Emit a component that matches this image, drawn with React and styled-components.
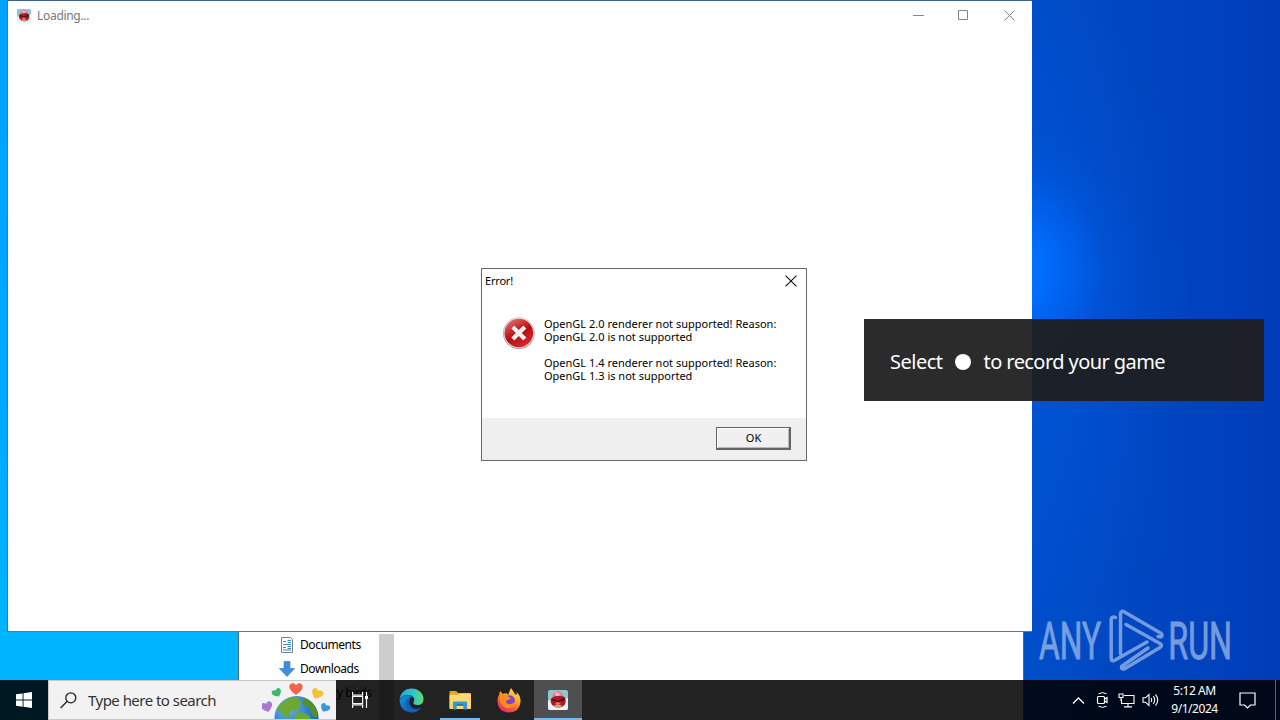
import React from "react";
import styled, { createGlobalStyle } from "styled-components";

const GlobalStyle = createGlobalStyle`
  * { box-sizing: border-box; }
  body { margin: 0; overflow: hidden; font-family: "Noto Sans", "Open Sans", sans-serif; }
  svg { display: block; flex: none; }
`;

const Desktop = styled.main`
  position: relative;
  width: 1280px;
  height: 720px;
  overflow: hidden;
  background:
    radial-gradient(ellipse 150px 145px at 1000px 270px, #007cff 0%, #0070ff 25%, rgba(0, 104, 250, 0.75) 45%, rgba(0, 92, 232, 0.3) 70%, rgba(0, 80, 215, 0) 100%),
    radial-gradient(ellipse 190px 420px at 1000px 330px, rgba(0, 92, 228, 0.6), rgba(0, 80, 210, 0)),
    linear-gradient(90deg, rgba(0, 0, 0, 0) 1020px, #004cc6 1020px, #0045c0 1160px, #003cb8 1280px),
    linear-gradient(180deg, #00a2fa, #00a8ff 50%, #00b4ff 90%);
`;

const Text = styled.span`
  display: inline-block;
  white-space: pre;
  font-size: ${(p) => p.$size}px;
  line-height: ${(p) => p.$line || p.$size * 1.3}px;
  letter-spacing: ${(p) => p.$track || 0}px;
  color: ${(p) => p.$color || "#000"};
`;

const Explorer = styled.section`
  position: absolute;
  left: 238px;
  top: 600px;
  width: 786px;
  height: 120px;
  display: flex;
  padding-top: 33px;
  background: #fff;
  border-left: 1px solid #4c6f86;
  border-right: 1px solid #3e6aa8;
`;

const NavList = styled.nav`
  width: 140px;
  display: flex;
  flex-direction: column;
  overflow: hidden;
`;

const NavRow = styled.div`
  height: 24px;
  padding-left: ${(p) => (p.$nested ? 51 : 40)}px;
  display: flex;
  align-items: center;
  gap: 5px;
`;

const ScrollTrack = styled.div`
  width: 15px;
  margin-top: 1px;
  background: #cdcdcd;
`;

const AppWindow = styled.section`
  position: absolute;
  left: 7px;
  top: 0;
  width: 1025px;
  height: 632px;
  background: #fff;
  border: solid;
  border-width: 1px 0 1px 1px;
  border-color: #3d5f86 transparent #5d7784 #1587c4;
`;

const TitleBar = styled.header`
  height: 29px;
  display: flex;
  align-items: center;
  padding: 0 0 0 9px;
  gap: 6px;
`;

const Controls = styled.div`
  margin-left: auto;
  display: flex;
`;

const ControlButton = styled.button`
  width: ${(p) => p.$w}px;
  height: 28px;
  padding: 0;
  border: 0;
  background: none;
  display: flex;
  align-items: center;
  justify-content: center;
`;

const Dialog = styled.section`
  position: absolute;
  left: 481px;
  top: 268px;
  width: 326px;
  height: 193px;
  display: flex;
  flex-direction: column;
  background: #fff;
  border: 1px solid #686868;
`;

const DialogTitle = styled.header`
  height: 24px;
  padding: 0 9px 0 3px;
  display: flex;
  align-items: center;
  justify-content: space-between;
`;

const DialogBody = styled.div`
  flex: 1;
  display: flex;
  gap: 9px;
  padding: 24px 0 0 20px;
`;

const Message = styled.div`
  display: flex;
  flex-direction: column;
`;

const DialogFooter = styled.footer`
  height: 42px;
  padding: 9px 15px 0 0;
  display: flex;
  justify-content: flex-end;
  background: #efefef;
`;

const OkButton = styled.button`
  width: 75px;
  height: 23px;
  padding: 0 0 0 1px;
  border: solid #646464;
  border-width: 1px 2px 2px 1px;
  box-shadow: inset 1px 1px #fff, inset -1px -1px #b8b8b8;
  background: #f0f0f0;
  font-family: inherit;
  display: flex;
  align-items: center;
  justify-content: center;
`;

const Toast = styled.aside`
  position: absolute;
  left: 864px;
  top: 319px;
  width: 400px;
  height: 82px;
  padding: 4px 0 0 26px;
  display: flex;
  align-items: center;
  background: rgba(30, 30, 30, 0.94);
`;

const RecordDot = styled.i`
  width: 16px;
  height: 16px;
  margin: 0 13px 0 12px;
  border-radius: 50%;
  background: #fff;
`;

const Watermark = styled.div`
  position: absolute;
  left: 1039px;
  top: 606px;
  height: 70px;
  display: flex;
  align-items: center;
  opacity: 0.52;
`;

const BrandWord = styled.span`
  width: ${(p) => p.$w}px;
  height: 52px;
  margin-top: 2px;
  line-height: 52px;
  font-family: Roboto, sans-serif;
  font-size: 52px;
  font-weight: 400;
  -webkit-text-stroke: 0.8px #e3ecf8;
  color: #e3ecf8;
  white-space: nowrap;
  transform: scaleX(${(p) => p.$squeeze});
  transform-origin: 0 50%;
`;

const Taskbar = styled.footer`
  position: absolute;
  left: 0;
  top: 680px;
  width: 1280px;
  height: 40px;
  display: flex;
  background: rgba(0, 0, 0, 0.865);
`;

const TaskButton = styled.div`
  position: relative;
  width: 48px;
  height: 40px;
  margin-right: ${(p) => p.$gap || 0}px;
  display: flex;
  align-items: center;
  justify-content: center;
  background: ${(p) => (p.$active ? "#4e4f50" : "transparent")};
  box-shadow: ${(p) => (p.$open ? "inset 0 -2px #76b9ed" : "none")};
`;

const RunningButton = styled(TaskButton)`
  width: 40px;
  margin: 0 5px 0 4px;
`;

const SearchBox = styled.div`
  width: 288px;
  height: 40px;
  padding: 0 2px 0 11px;
  display: flex;
  align-items: center;
  gap: 11px;
  background: #f2f2f2;
  border: solid #c8c8c8;
  border-width: 1px 0 1px 1px;
`;

const SearchLabel = styled(Text)`
  padding-top: 2px;
`;

const SearchArt = styled.div`
  margin-left: auto;
  align-self: flex-end;
`;

const Tray = styled.div`
  margin-left: auto;
  display: flex;
  align-items: center;
`;

const TrayIcon = styled.div`
  width: 24px;
  display: flex;
  justify-content: center;
`;

const Clock = styled.div`
  width: 65px;
  display: flex;
  flex-direction: column;
  align-items: center;
`;

const Notice = styled.div`
  width: 40px;
  height: 40px;
  display: flex;
  align-items: center;
  justify-content: center;
  margin-right: 8px;
`;

const ShowDesktop = styled.div`
  width: 5px;
  height: 40px;
  border-left: 1px solid #55657c;
`;

const BirdIcon = ({ size }) => (
  <svg width={size} height={size} viewBox="0 0 20 20">
    <rect width="20" height="20" rx="2" fill="#8cc9cf" />
    <path d="M0 11l4-2 6 2 10-3v10q0 2-2 2H2q-2 0-2-2z" fill="#e9f5f4" />
    <path d="M4 7q1-5 5-6 5 0 7 6z" fill="#e07f98" />
    <path d="M7 2l4 1 2 4H8z" fill="#f3b6c2" />
    <path d="M2.500 10q2-4 7-4 6-1 8 3 1 4-2 7-5 3-10 0-3-2-3-6z" fill="#b3152a" />
    <path d="M3 8l7 3 7-4-1 3.500-6 1.500-5-1.500z" fill="#35141a" />
    <path d="M6 15.500q4-2 8 0-1 2.500-4 2.500t-4-2.500z" fill="#cda283" />
    <path d="M9 12l4 1-3 2-3-1z" fill="#d98a2c" />
  </svg>
);

const Cross = ({ size, color, width = 1 }) => (
  <svg width={size} height={size} viewBox="0 0 11 11">
    <path d="M.5.5l10 10M10.5.5l-10 10" fill="none" stroke={color} strokeWidth={width} />
  </svg>
);

const ErrorIcon = () => (
  <svg width="33" height="33" viewBox="0 0 33 33">
    <defs>
      <linearGradient id="red" x1="0" y1="0" x2=".6" y2="1">
        <stop offset="0" stopColor="#e58a88" />
        <stop offset=".4" stopColor="#cc3034" />
        <stop offset=".6" stopColor="#b90d15" />
        <stop offset="1" stopColor="#d4262c" />
      </linearGradient>
    </defs>
    <circle cx="16.8" cy="16.3" r="15.8" fill="#a19795" />
    <circle cx="16.8" cy="16" r="15.2" fill="#ece4e2" />
    <circle cx="16.8" cy="16" r="14.3" fill="url(#red)" />
    <path d="M10.8 10l12 12M22.8 10l-12 12" stroke="#9a1a1e" strokeWidth="5.4" />
    <path d="M10.8 10l12 12M22.8 10l-12 12" stroke="#f3eeea" strokeWidth="4.4" />
  </svg>
);

const DocumentIcon = () => (
  <svg width="16" height="16" viewBox="0 0 16 16">
    <path d="M2.5.5h9l2 2v13h-11z" fill="#fff" stroke="#77838c" />
    <path d="M4 4.5h3M8.500 3.500h3.500M8.500 5.500h3.500M4 7.500h8M4 10.500h3M8.500 9.500h3.500M8.500 11.500h3.500M4 13h8" stroke="#3988c9" strokeWidth="1.200" />
  </svg>
);

const DownloadIcon = () => (
  <svg width="16" height="16" viewBox="0 0 16 16">
    <path d="M5 .5h6v7h4.600L8 15.600.4 7.500H5z" fill="#3b8fdb" stroke="#327bbd" strokeWidth=".6" />
  </svg>
);

const WindowsIcon = () => (
  <svg width="16" height="16" viewBox="0 0 16 16">
    <path d="M0 2.300l6.600-.9v6.200H0zM7.500 1.200L16 0v7.600H7.500zM0 8.500h6.600v6.200L0 13.700zM7.500 8.500H16V16l-8.500-1.200z" fill="#fff" />
  </svg>
);

const SearchIcon = () => (
  <svg width="17" height="17" viewBox="0 0 17 17" fill="none" stroke="#222" strokeWidth="1.300">
    <circle cx="10.800" cy="5.800" r="5" />
    <path d="M7.200 9.300L.6 16" />
  </svg>
);

const heart = "M0-3.600C-3-8-8-4.500-6.300-.5-5 2.700 0 5.800 0 5.800S5 2.700 6.300-.5C8-4.500 3-8 0-3.600z";

const EarthArt = () => (
  <svg width="72" height="38" viewBox="0 0 72 38">
    <defs>
      <radialGradient id="sea" cx=".3" cy=".25" r=".8">
        <stop offset="0" stopColor="#6fb4ee" />
        <stop offset=".6" stopColor="#287ecb" />
        <stop offset="1" stopColor="#125fa9" />
      </radialGradient>
      <clipPath id="globe"><circle cx="34.500" cy="37" r="22" /></clipPath>
    </defs>
    <circle cx="34.500" cy="37" r="22" fill="url(#sea)" />
    <g clipPath="url(#globe)" fill="#6ca832">
      <path d="M21 21q7-6 16-5l-1 3 4 2-3 3 2 2-5 4-4-1-3 4 1 4-5-1-5-6-3 1q1-7 6-10z" />
      <path d="M41 16q11 3 15 15l-2 7-4-4-3-8-5-1-2-4 3-2z" fill="#538f2b" />
      <path d="M33 33l6-2 8 3 2 4H32z" />
    </g>
    <path d={heart} transform="translate(34 8)" fill="#ef654c" />
    <path d={heart} transform="translate(15 12) rotate(-28) scale(.72)" fill="#37b967" />
    <path d={heart} transform="translate(55 13) rotate(24) scale(.88)" fill="#f5c132" />
    <path d={heart} transform="translate(5 26) rotate(-18) scale(.88)" fill="#a978cf" />
    <path d={heart} transform="translate(63 27) rotate(28) scale(.72)" fill="#3398dc" />
  </svg>
);

const TaskViewIcon = () => (
  <svg width="18" height="18" viewBox="0 0 18 18" fill="none" stroke="#f4f4f4" strokeWidth="1.200">
    <path d="M1.600 1v3.200h10V1M1.600 17v-3.200h10V17M1.600 5.500h10v7h-10zM15.500 1v16" />
    <path d="M14 5h3v3h-3z" fill="#fff" stroke="none" />
  </svg>
);

const EdgeIcon = () => (
  <svg width="25" height="25" viewBox="0 0 25 25">
    <defs>
      <linearGradient id="edgeTop"><stop stopColor="#22a5df" /><stop offset=".6" stopColor="#32c6ca" /><stop offset="1" stopColor="#65dc61" /></linearGradient>
      <linearGradient id="edgeLow" x1="0" y1="0" x2="1" y2="1"><stop stopColor="#1794e0" /><stop offset="1" stopColor="#0b4a9c" /></linearGradient>
    </defs>
    <path d="M.5 12C1 5 6 .5 12.500.5S24.500 5 24.500 11q0 6-6 6-5 0-4-3 2-3-1-5.500C9 5 2 8 .5 12z" fill="url(#edgeTop)" />
    <path d="M.5 12.500C3 7 10 6 13 9q-5 1-4 6 1 6 8 6 3 0 5-1-4 5-10 4.500Q1 23.500.5 12.500z" fill="url(#edgeLow)" />
    <path d="M12.500 9Q5 11 7 18q2 5 7 6.500 5-1 8-4.500-8 3-11-3-2-4 1.500-8z" fill="#1260b7" />
  </svg>
);

const FolderIcon = () => (
  <svg width="22" height="19" viewBox="0 0 23 20">
    <path d="M.5 1q0-1 1-1h6l2 2H22q1 0 1 1v15H.5z" fill="#e9a51c" />
    <path d="M.5 4h9l2-1.500H22q1 0 1 1V19H.5z" fill="#ffd970" />
    <path d="M4 19.500V12q0-1 1-1h13q1 0 1 1v7.500h-4v-4H8v4z" fill="#3597d8" />
    <path d="M8 15.500V14h7v1.500z" fill="#1872b2" />
  </svg>
);

const FirefoxIcon = () => (
  <svg width="24" height="25" viewBox="0 0 24 25">
    <defs><linearGradient id="fox" x1=".8" y1="0" x2=".2" y2="1"><stop stopColor="#ffe849" /><stop offset=".45" stopColor="#ff9825" /><stop offset=".75" stopColor="#ff4540" /><stop offset="1" stopColor="#df2783" /></linearGradient></defs>
    <path d="M2 7l1-4 3 3q2-1 4-.5L11 7l3-7 4 6 2 1-.5-3Q24 8 23.500 14q-.8 10-11.500 10.500Q1 24 .5 13 .6 9 2 7z" fill="url(#fox)" />
    <circle cx="12.500" cy="12.500" r="5.300" fill="#7b43d2" />
    <path d="M4 7q4-1 7 1 1 2 3 2-1 2-4 2-2 3 1 4 4 1 6-2 1 5-4 6-6 1-9-4-2-5 0-9z" fill="#ff8a20" />
  </svg>
);

const PlayMark = () => (
  <svg width="56" height="66" viewBox="0 0 56 66" fill="none" stroke="#dce9fa" strokeWidth="3.500" strokeLinecap="round" strokeLinejoin="round">
    <path d="M6.500 9.500Q2.200 8 2.200 12v38q0 4 4 2L38 34" />
    <path d="M11.500 46V6q0-4 4-2l36 21q3 2 .5 4l-3-.500" />
    <path d="M17 16.500l34 19q3 2 0 4L16 60.500q-4 1.500-3.500-2L39 40" />
  </svg>
);

const CaretIcon = () => (
  <svg width="13" height="9" viewBox="0 0 13 9"><path d="M1 7.500l5.500-5.500L12 7.500" fill="none" stroke="#fff" strokeWidth="1.300" /></svg>
);

const MeetIcon = () => (
  <svg width="13" height="18" viewBox="0 0 13 18" fill="none" stroke="#fff" strokeWidth="1.200">
    <path d="M2.500 2.800q4-2.400 8 0M2.500 15.200q4 2.400 8 0" strokeWidth="1" />
    <rect x="1.500" y="5.500" width="7" height="7" rx="1" />
    <path d="M8.500 8l2.500-1.500v5l-2.500-1.500" />
  </svg>
);

const NetworkIcon = () => (
  <svg width="17" height="15" viewBox="0 0 17 15" fill="none" stroke="#fff" strokeWidth="1.100">
    <path d="M6 2.500h10v8H3.500V6M10 10.500v3M6 13.900h8M1 1h4v3.500H1zM3 4.500V8" />
  </svg>
);

const VolumeIcon = () => (
  <svg width="17" height="14" viewBox="0 0 17 14" fill="none" stroke="#fff" strokeWidth="1.100">
    <path d="M1 4.800h2.500L7 1.500v11L3.500 9.200H1zM9 5q1.400 2 0 4M11.300 3.200q2.800 3.800 0 7.600M13.500 1.400q4.400 5.600 0 11.200" />
  </svg>
);

const NoticeIcon = () => (
  <svg width="17" height="17" viewBox="0 0 17 17"><path d="M1 1h15v12h-4.500l-3 3-3-3H1z" fill="none" stroke="#fff" strokeWidth="1.200" /></svg>
);

const messageLines = [
  "OpenGL 2.0 renderer not supported! Reason:",
  "OpenGL 2.0 is not supported",
  " ",
  "OpenGL 1.4 renderer not supported! Reason:",
  "OpenGL 1.3 is not supported",
];

export default function App() {
  return (
    <>
      <GlobalStyle />
      <Desktop>
        <Explorer>
          <NavList>
            <NavRow><DocumentIcon /><Text $size={12} $track={-0.43}>Documents</Text></NavRow>
            <NavRow><DownloadIcon /><Text $size={12} $track={-0.45}>Downloads</Text></NavRow>
            <NavRow $nested><DocumentIcon /><Text $size={12} $track={-0.4}>Angry birds</Text></NavRow>
          </NavList>
          <ScrollTrack />
        </Explorer>

        <AppWindow>
          <TitleBar>
            <BirdIcon size={14} />
            <Text $size={12} $color="#777" $track={-0.3}>Loading...</Text>
            <Controls>
              <ControlButton $w={46}><svg width="11" height="11"><path d="M0 5.500h11" stroke="#8a8a8a" /></svg></ControlButton>
              <ControlButton $w={45}><svg width="11" height="11"><path d="M.5.5h9v9H.5z" fill="none" stroke="#858585" /></svg></ControlButton>
              <ControlButton $w={46}><Cross size={11} color="#858585" /></ControlButton>
            </Controls>
          </TitleBar>
        </AppWindow>

        <Dialog>
          <DialogTitle>
            <Text $size={11} $track={-0.2}>Error!</Text>
            <Cross size={12} color="#111" />
          </DialogTitle>
          <DialogBody>
            <ErrorIcon />
            <Message>
              {messageLines.map((line, i) => (
                <Text key={i} $size={11} $line={13}>{line}</Text>
              ))}
            </Message>
          </DialogBody>
          <DialogFooter>
            <OkButton><Text $size={11}>OK</Text></OkButton>
          </DialogFooter>
        </Dialog>

        <Toast>
          <Text $size={20} $track={-0.5} $color="#fff">Select</Text>
          <RecordDot />
          <Text $size={20} $track={-0.57} $color="#fff">to record your game</Text>
        </Toast>

        <Watermark>
          <BrandWord $w={70} $squeeze={0.61}>ANY</BrandWord>
          <PlayMark />
          <BrandWord $w={68} $squeeze={0.62}>{"\u200A"}RUN</BrandWord>
        </Watermark>

        <Taskbar>
          <TaskButton><WindowsIcon /></TaskButton>
          <SearchBox>
            <SearchIcon />
            <SearchLabel $size={15} $track={-0.53} $color="#333">Type here to search</SearchLabel>
            <SearchArt><EarthArt /></SearchArt>
          </SearchBox>
          <TaskButton $gap={3}><TaskViewIcon /></TaskButton>
          <TaskButton $gap={1}><EdgeIcon /></TaskButton>
          <RunningButton $open><FolderIcon /></RunningButton>
          <TaskButton $gap={1}><FirefoxIcon /></TaskButton>
          <TaskButton $active $open><BirdIcon size={20} /></TaskButton>
          <Tray>
            <TrayIcon><CaretIcon /></TrayIcon>
            <TrayIcon><MeetIcon /></TrayIcon>
            <TrayIcon><NetworkIcon /></TrayIcon>
            <TrayIcon><VolumeIcon /></TrayIcon>
            <Clock>
              <Text $size={12} $line={18} $track={-0.45} $color="#fff">5:12 AM</Text>
              <Text $size={12} $line={18} $track={-0.45} $color="#fff">9/1/2024</Text>
            </Clock>
            <Notice><NoticeIcon /></Notice>
            <ShowDesktop />
          </Tray>
        </Taskbar>
      </Desktop>
    </>
  );
}
